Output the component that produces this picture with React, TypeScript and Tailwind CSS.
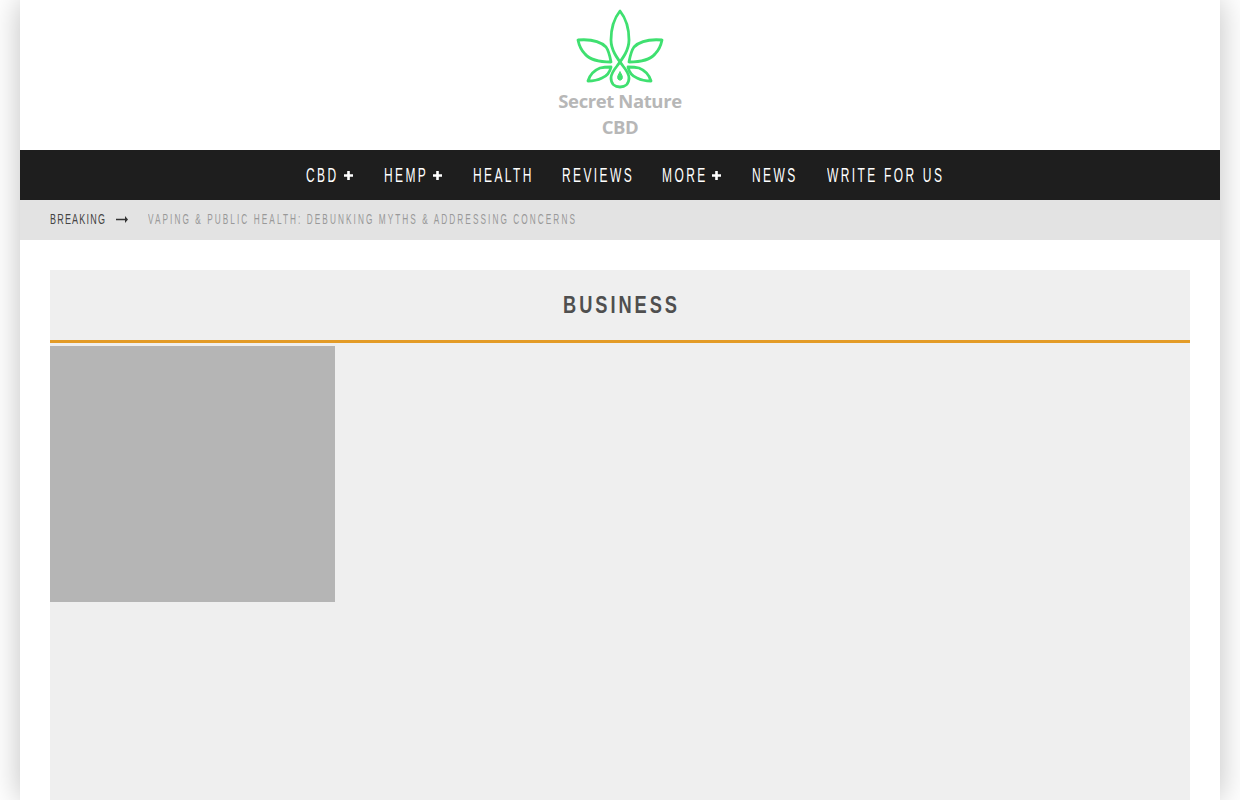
import type { ReactNode } from "react";

const sans = "font-['Liberation_Sans',sans-serif]";

function Squeezed({ width, className, children }: { width: number; className: string; children: ReactNode }) {
  return (
    <div className="shrink-0" style={{ width }}>
      <span className={`inline-block origin-left whitespace-nowrap ${className}`}>{children}</span>
    </div>
  );
}

function Plus() {
  return (
    <svg width="9" height="9" viewBox="0 0 9 9" className="mr-[1px] mt-[1px] shrink-0" fill="#fff">
      <path d="M3.2 0h2.6v3.2H9v2.6H5.8V9H3.2V5.8H0V3.2h3.2z" />
    </svg>
  );
}

function Logo() {
  return (
    <svg width="130" height="81" viewBox="15 8 130 81" fill="none" stroke="#3fe070" strokeWidth="2.8" strokeLinejoin="round" strokeLinecap="round">
      <path d="M80 11C72 21 71 31 71 40C71 50 77 58 83 66C87 71 89 74 89 78C89 84 85 87 80 87C75 87 71 84 71 78C71 74 73 71 77 66C83 58 89 50 89 40C89 31 88 21 80 11Z" />
      <path d="M38 40C50 39 60 41 66 47C69 51 70 57 71 62C60 62 50 60 45 54C41 50 39 45 38 40Z" />
      <path d="M122 40C110 39 100 41 94 47C91 51 90 57 89 62C100 62 110 60 115 54C119 50 121 45 122 40Z" />
      <path d="M48 81C50 74 55 70 60 68C64 67 68 67 71 67C70 72 67 76 62 78C58 80 53 81 48 81Z" />
      <path d="M111 81C109 74 104 70 99 68C95 67 91 67 88 67C89 72 92 76 97 78C101 80 106 81 111 81Z" />
      <path d="M80 72C78 75 77 77 78 79C79 80.5 81 80.5 82 79C83 77 82 75 80 72Z" fill="#3fe070" strokeWidth="1" />
    </svg>
  );
}

function NavItem({ label, width, plus }: { label: string; width: number; plus?: boolean }) {
  return (
    <div className="flex items-center">
      <Squeezed width={width} className="[transform:scaleX(0.6)] text-[20px] tracking-[4px] [word-spacing:1px] text-white">
        {label}
      </Squeezed>
      {plus && <Plus />}
    </div>
  );
}

export default function App() {
  return (
    <div className="h-screen overflow-hidden bg-white">
      <div className="mx-auto flex h-full w-[1200px] flex-col bg-white shadow-[0_0_30px_rgba(0,0,0,0.25)]">
        <header className="flex h-[150px] flex-col items-center pt-[8px]">
          <Logo />
          <div className="-mt-px text-center font-['Open_Sans',sans-serif] text-[18.5px] leading-[26px] font-bold tracking-[-0.4px] text-[#b7b7b7]">
            <div>Secret Nature</div>
            <div>CBD</div>
          </div>
        </header>
        <nav className={`flex h-[50px] items-center justify-center gap-[30px] bg-[#1e1e1e] pl-[9px] ${sans}`}>
          <NavItem label="CBD" width={38} plus />
          <NavItem label="HEMP" width={49} plus />
          <NavItem label="HEALTH" width={59} />
          <NavItem label="REVIEWS" width={70} />
          <NavItem label="MORE" width={50} plus />
          <NavItem label="NEWS" width={45} />
          <NavItem label="WRITE FOR US" width={116} />
        </nav>
        <div className={`flex h-[40px] items-center bg-[#e3e3e3] px-[30px] pb-[2px] ${sans}`}>
          <Squeezed width={66} className="[transform:scaleX(0.6)] text-[15px] tracking-[2px] text-[#444]">
            BREAKING
          </Squeezed>
          <svg width="12" height="7" viewBox="0 0 12 7" className="mr-[20px] shrink-0" fill="#333">
            <path d="M0 2.8h9V0l3 3.5-3 3.5V4.2H0z" />
          </svg>
          <Squeezed width={429} className="[transform:scaleX(0.55)] text-[15px] tracking-[3.75px] text-[#999]">
            VAPING &amp; PUBLIC HEALTH: DEBUNKING MYTHS &amp; ADDRESSING CONCERNS
          </Squeezed>
        </div>
        <main className="flex-1 px-[30px] pt-[30px]">
          <div className="h-full bg-[#efefef]">
            <div className={`flex h-[73px] items-start justify-center border-b-[3px] border-[#e39b27] pt-[19px] ${sans}`}>
              <h1 className="w-[115px] whitespace-nowrap">
                <span className="inline-block origin-left [transform:scaleX(0.76)] text-[24px] leading-[32px] font-bold tracking-[3.9px] text-[#4f4f4f]">
                  BUSINESS
                </span>
              </h1>
            </div>
            <div className="mt-[3px] h-[256px] w-[285px] bg-[#b5b5b5]" />
          </div>
        </main>
      </div>
    </div>
  );
}
